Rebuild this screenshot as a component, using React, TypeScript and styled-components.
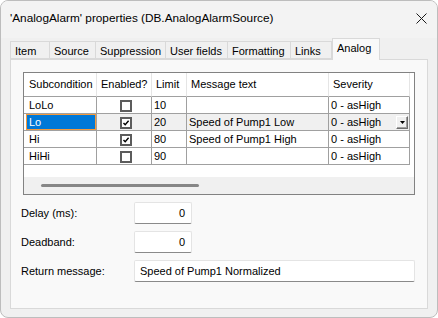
import styled, { createGlobalStyle } from "styled-components";

const GlobalStyle = createGlobalStyle`
  html, body {
    margin: 0;
    padding: 0;
    background: #ffffff;
  }
  body {
    font-family: "Liberation Sans", Arial, sans-serif;
    font-size: 11px;
    color: #000000;
  }
  * {
    box-sizing: border-box;
  }
`;

type Row = {
  name: string;
  enabled: boolean;
  limit: string;
  message: string;
  severity: string;
  current?: boolean;
};

const rows: Row[] = [
  { name: "LoLo", enabled: false, limit: "10", message: "", severity: "0 - asHigh" },
  {
    name: "Lo",
    enabled: true,
    limit: "20",
    message: "Speed of Pump1 Low",
    severity: "0 - asHigh",
    current: true,
  },
  { name: "Hi", enabled: true, limit: "80", message: "Speed of Pump1 High", severity: "0 - asHigh" },
  { name: "HiHi", enabled: false, limit: "90", message: "", severity: "0 - asHigh" },
];

const tabs = [
  { label: "Item", width: 40 },
  { label: "Source", width: 46 },
  { label: "Suppression", width: 70 },
  { label: "User fields", width: 62 },
  { label: "Formatting", width: 63 },
  { label: "Links", width: 41 },
  { label: "Analog", width: 48, active: true },
];

const columns = [
  { label: "Subcondition", width: 73 },
  { label: "Enabled?", width: 55 },
  { label: "Limit", width: 35 },
  { label: "Message text", width: 142 },
  { label: "Severity", width: 81 },
];

const CheckMark = () => (
  <svg width="8" height="8" viewBox="0 0 8 8">
    <path d="M1.5 4 L3.2 5.8 L6.6 1.8" fill="none" stroke="#000" strokeWidth="1.4" />
  </svg>
);

const App = () => {
  return (
    <>
      <GlobalStyle />
      <Window>
        <TitleBar>
          <Title>'AnalogAlarm' properties (DB.AnalogAlarmSource)</Title>
          <CloseButton>
            <svg width="11" height="11" viewBox="0 0 11 11">
              <path d="M0.5 0.5 L10.5 10.5 M10.5 0.5 L0.5 10.5" stroke="#1a1a1a" strokeWidth="1" />
            </svg>
          </CloseButton>
        </TitleBar>

        <Body>
          <TabRow>
            {tabs.map((t) => (
              <Tab key={t.label} $width={t.width} $active={!!t.active}>
                {t.label}
              </Tab>
            ))}
          </TabRow>

          <Panel>
            <GridBox>
              <Table>
                <colgroup>
                  {columns.map((c) => (
                    <col key={c.label} style={{ width: c.width }} />
                  ))}
                </colgroup>
                <thead>
                  <tr>
                    {columns.map((c) => (
                      <HeadCell key={c.label}>{c.label}</HeadCell>
                    ))}
                  </tr>
                </thead>
                <tbody>
                  {rows.map((r) => (
                    <tr key={r.name}>
                      <Cell $current={!!r.current} $first>
                        {r.current ? <Selected>{r.name}</Selected> : r.name}
                      </Cell>
                      <Cell $current={!!r.current}>
                        <CheckBox>{r.enabled && <CheckMark />}</CheckBox>
                      </Cell>
                      <Cell $current={!!r.current}>{r.limit}</Cell>
                      <Cell $current={!!r.current}>{r.message}</Cell>
                      <Cell $current={!!r.current}>
                        <SeverityWrap>
                          <span>{r.severity}</span>
                          {r.current && (
                            <DropButton>
                              <svg width="5" height="3" viewBox="0 0 5 3">
                                <path d="M0 0 H5 L2.5 3 Z" fill="#000" />
                              </svg>
                            </DropButton>
                          )}
                        </SeverityWrap>
                      </Cell>
                    </tr>
                  ))}
                </tbody>
              </Table>
              <Spacer />
              <HScroll>
                <Thumb />
              </HScroll>
            </GridBox>

            <Fields>
              <FieldRow>
                <Label>Delay (ms):</Label>
                <Input $width={58} $align="right">0</Input>
              </FieldRow>
              <FieldRow>
                <Label>Deadband:</Label>
                <Input $width={58} $align="right">0</Input>
              </FieldRow>
              <FieldRow>
                <Label>Return message:</Label>
                <Input $width={281} $align="left">Speed of Pump1 Normalized</Input>
              </FieldRow>
            </Fields>
          </Panel>
        </Body>
      </Window>
    </>
  );
};

export default App;

const Window = styled.div`
  width: 438px;
  height: 318px;
  display: flex;
  flex-direction: column;
  background: #f0f0f0;
  border: 1px solid #bdbdbd;
  border-radius: 8px;
  overflow: hidden;
`;

const TitleBar = styled.div`
  height: 37px;
  display: flex;
  align-items: flex-start;
  justify-content: space-between;
  padding: 9px 9px 0 9px;
  background: #f3f3f3;
`;

const Title = styled.div`
  font-size: 11.8px;
  line-height: 16px;
  color: #000;
`;

const CloseButton = styled.div`
  width: 12px;
  height: 16px;
  display: flex;
  align-items: center;
  justify-content: center;
  margin-right: 1px;
`;

const Body = styled.div`
  flex: 1;
  display: flex;
  flex-direction: column;
  padding: 0 9px 8px 9px;
`;

const TabRow = styled.div`
  height: 21px;
  display: flex;
  align-items: flex-end;
  position: relative;
  z-index: 1;
`;

const Tab = styled.div<{ $width: number; $active: boolean }>`
  width: ${({ $width }) => $width}px;
  height: ${({ $active }) => ($active ? 22 : 18)}px;
  margin-bottom: ${({ $active }) => ($active ? -1 : 0)}px;
  padding: 2px 0 0 4px;
  line-height: 15px;
  background: ${({ $active }) => ($active ? "#f9f9f9" : "#f0f0f0")};
  border: 1px solid #d9d9d9;
  border-bottom: ${({ $active }) => ($active ? "none" : "1px solid #d9d9d9")};
  border-left: ${({ $active }) => ($active ? "1px solid #d9d9d9" : "none")};
  &:first-child {
    border-left: 1px solid #d9d9d9;
  }
  white-space: nowrap;
`;

const Panel = styled.div`
  flex: 1;
  display: flex;
  flex-direction: column;
  background: #f9f9f9;
  border: 1px solid #d9d9d9;
  padding: 12px 12px 0 12px;
`;

const GridBox = styled.div`
  height: 123px;
  display: flex;
  flex-direction: column;
  background: #ffffff;
  border: 1px solid #828282;
`;

const Table = styled.table`
  width: 386px;
  table-layout: fixed;
  border-collapse: separate;
  border-spacing: 0;
  font-size: 11px;
`;

const HeadCell = styled.th`
  font-weight: normal;
  text-align: left;
  line-height: 23px;
  padding: 0 0 0 4px;
  border-right: 1px solid #e5e5e5;
  border-bottom: 1px solid #a0a0a0;
  white-space: nowrap;
  overflow: hidden;
  &:first-child {
    padding-left: 5px;
  }
`;

const Cell = styled.td<{ $current: boolean; $first?: boolean }>`
  height: 17px;
  line-height: 16px;
  padding: 0 0 0 ${({ $first }) => ($first ? 5 : 2)}px;
  background: ${({ $current }) => ($current ? "#f0f0f0" : "#ffffff")};
  border-right: 1px solid #a0a0a0;
  border-bottom: 1px solid #a0a0a0;
  white-space: nowrap;
  overflow: hidden;
  vertical-align: middle;
  &:first-child:has(span) {
    padding-left: 2px;
    background: #ffffff;
  }
`;

const Selected = styled.span`
  display: block;
  height: 16px;
  line-height: 14px;
  padding-left: 2px;
  background: #0078d7;
  color: #ffffff;
  border: 1px solid #f39a3d;
`;

const CheckBox = styled.div`
  width: 12px;
  height: 12px;
  margin: 1px auto 0 auto;
  position: relative;
  left: 1px;
  border: 2px solid #5c5c5c;
  background: #ffffff;
  display: flex;
  align-items: center;
  justify-content: center;
`;

const SeverityWrap = styled.div`
  display: flex;
  align-items: center;
  justify-content: space-between;
  padding-right: 1px;
`;

const DropButton = styled.div`
  width: 12px;
  height: 13px;
  margin-top: 1px;
  display: flex;
  align-items: center;
  justify-content: center;
  background: #f0f0f0;
  border: 1px solid;
  border-color: #ffffff #6d6d6d #6d6d6d #ffffff;
  box-shadow: inset -1px -1px 0 #a0a0a0;
`;

const Spacer = styled.div`
  height: 12px;
`;

const HScroll = styled.div`
  height: 17px;
  background: #f0f0f0;
  padding: 7px 0 0 17px;
`;

const Thumb = styled.div`
  width: 158px;
  height: 3px;
  border-radius: 2px;
  background: #868686;
`;

const Fields = styled.div`
  display: flex;
  flex-direction: column;
  gap: 7px;
  margin-top: 7px;
`;

const FieldRow = styled.div`
  display: flex;
  align-items: center;
  height: 22px;
`;

const Label = styled.div`
  width: 111px;
  margin-left: -2px;
  margin-right: 2px;
`;

const Input = styled.div<{ $width: number; $align: "left" | "right" }>`
  width: ${({ $width }) => $width}px;
  height: 22px;
  line-height: 20px;
  padding: 0 6px 0 5px;
  text-align: ${({ $align }) => $align};
  background: #ffffff;
  border: 1px solid #e4e4e4;
  border-bottom: 1px solid #8a8a8a;
  border-radius: 2px;
`;
